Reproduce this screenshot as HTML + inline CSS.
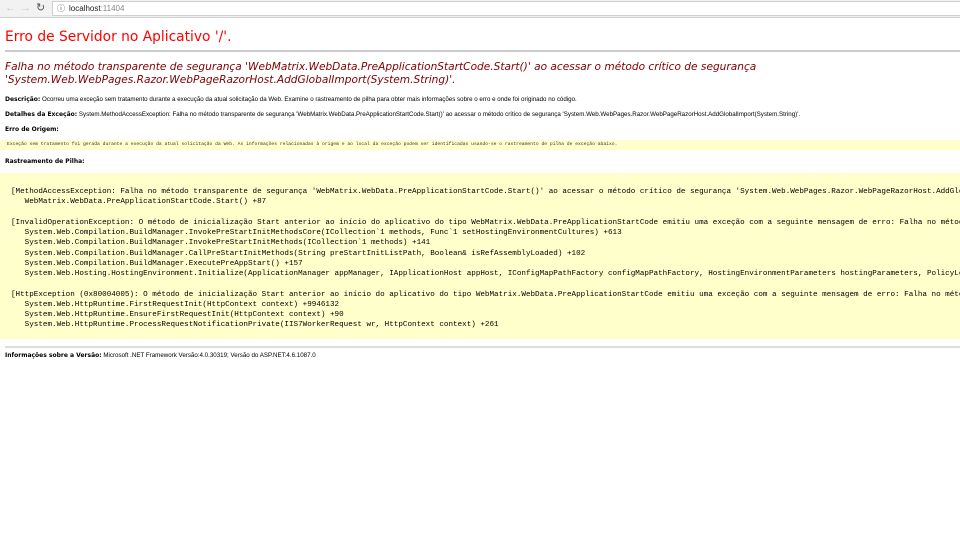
<!DOCTYPE html>
<html><head><meta charset="utf-8"><style>
*{margin:0;padding:0;box-sizing:border-box}
html,body{width:960px;height:550px;overflow:hidden}
body{background:#fff;position:relative;font-family:"Liberation Sans",Arial,sans-serif}
.wrap{position:absolute;left:0;top:0;width:960px;height:550px;overflow:hidden}
.a{position:absolute;white-space:nowrap}
.bar{position:absolute;left:0;top:0;width:960px;height:18px;background:#f2f2f2;border-bottom:1px solid #cfcfcf}
.url{position:absolute;left:52px;top:1px;width:910px;height:15px;background:#fff;border:1px solid #d0d0d0;font-size:8px;line-height:13px;padding-left:16px;color:#222}
.url span{color:#888}
.v{font-family:"DejaVu Sans",Verdana,sans-serif}
.sm{font-size:6.2px;color:#000}
.sm b{font-family:"DejaVu Sans",Verdana,sans-serif;font-size:6px}
.mono{font-family:"Liberation Mono",monospace;font-size:7.6px;line-height:10.25px;color:#000;white-space:pre}
</style></head><body><div class="wrap">
<div class="bar">
<div class="a" style="left:5px;top:2px;font-size:11px;color:#c8c8c8">&#8592;</div>
<div class="a" style="left:20px;top:2px;font-size:11px;color:#c8c8c8">&#8594;</div>
<div class="a" style="left:36px;top:1px;font-size:11px;color:#555">&#8635;</div>
<div class="url"><span style="position:absolute;left:4px;top:0;color:#555;font-size:8px">&#9432;</span>localhost<span>:11404</span></div>
</div>
<div class="a v" style="left:5px;top:29px;font-size:13.8px;color:#ff0000">Erro de Servidor no Aplicativo '/'.</div>
<div style="position:absolute;left:5px;top:50px;width:955px;height:2px;background:#ccc"></div>
<div class="a v" style="left:5px;top:61px;font-size:10.6px;font-style:italic;color:#800000;line-height:13px">Falha no método transparente de segurança 'WebMatrix.WebData.PreApplicationStartCode.Start()' ao acessar o método crítico de segurança<br>'System.Web.WebPages.Razor.WebPageRazorHost.AddGlobalImport(System.String)'.</div>
<div class="a sm" style="left:5px;top:96px"><b>Descrição:</b> Ocorreu uma exceção sem tratamento durante a execução da atual solicitação da Web. Examine o rastreamento de pilha para obter mais informações sobre o erro e onde foi originado no código.</div>
<div class="a sm" style="left:5px;top:111px"><b>Detalhes da Exceção:</b> System.MethodAccessException: Falha no método transparente de segurança 'WebMatrix.WebData.PreApplicationStartCode.Start()' ao acessar o método crítico de segurança 'System.Web.WebPages.Razor.WebPageRazorHost.AddGlobalImport(System.String)'.</div>
<div class="a sm" style="left:5px;top:126px"><b>Erro de Origem:</b></div>
<div style="position:absolute;left:0;top:140px;width:960px;height:10px;background:#ffffcc"></div>
<div class="a" style="left:7px;top:142px;font-family:'Liberation Mono',monospace;font-size:4.7px;color:#333">Exceção sem tratamento foi gerada durante a execução da atual solicitação da Web. As informações relacionadas à origem e ao local da exceção podem ser identificadas usando-se o rastreamento de pilha de exceção abaixo.</div>
<div class="a sm" style="left:5px;top:158px"><b>Rastreamento de Pilha:</b></div>
<div style="position:absolute;left:0;top:173px;width:960px;height:166px;background:#ffffcc"></div>
<div class="a mono" style="left:11px;top:187px">[MethodAccessException: Falha no método transparente de segurança 'WebMatrix.WebData.PreApplicationStartCode.Start()' ao acessar o método crítico de segurança 'System.Web.WebPages.Razor.WebPageRazorHost.AddGlobalImport(System.String)'.]
   WebMatrix.WebData.PreApplicationStartCode.Start() +87

[InvalidOperationException: O método de inicialização Start anterior ao início do aplicativo do tipo WebMatrix.WebData.PreApplicationStartCode emitiu uma exceção com a seguinte mensagem de erro: Falha no método transparente]
   System.Web.Compilation.BuildManager.InvokePreStartInitMethodsCore(ICollection`1 methods, Func`1 setHostingEnvironmentCultures) +613
   System.Web.Compilation.BuildManager.InvokePreStartInitMethods(ICollection`1 methods) +141
   System.Web.Compilation.BuildManager.CallPreStartInitMethods(String preStartInitListPath, Boolean&amp; isRefAssemblyLoaded) +102
   System.Web.Compilation.BuildManager.ExecutePreAppStart() +157
   System.Web.Hosting.HostingEnvironment.Initialize(ApplicationManager appManager, IApplicationHost appHost, IConfigMapPathFactory configMapPathFactory, HostingEnvironmentParameters hostingParameters, PolicyLevel policyLevel)

[HttpException (0x80004005): O método de inicialização Start anterior ao início do aplicativo do tipo WebMatrix.WebData.PreApplicationStartCode emitiu uma exceção com a seguinte mensagem de erro: Falha no método]
   System.Web.HttpRuntime.FirstRequestInit(HttpContext context) +9946132
   System.Web.HttpRuntime.EnsureFirstRequestInit(HttpContext context) +90
   System.Web.HttpRuntime.ProcessRequestNotificationPrivate(IIS7WorkerRequest wr, HttpContext context) +261</div>
<div style="position:absolute;left:5px;top:346px;width:955px;height:2px;background:#ddd"></div>
<div class="a sm" style="left:5px;top:352px"><b>Informações sobre a Versão:</b> Microsoft .NET Framework Versão:4.0.30319; Versão do ASP.NET:4.6.1087.0</div>
</div></body></html>
